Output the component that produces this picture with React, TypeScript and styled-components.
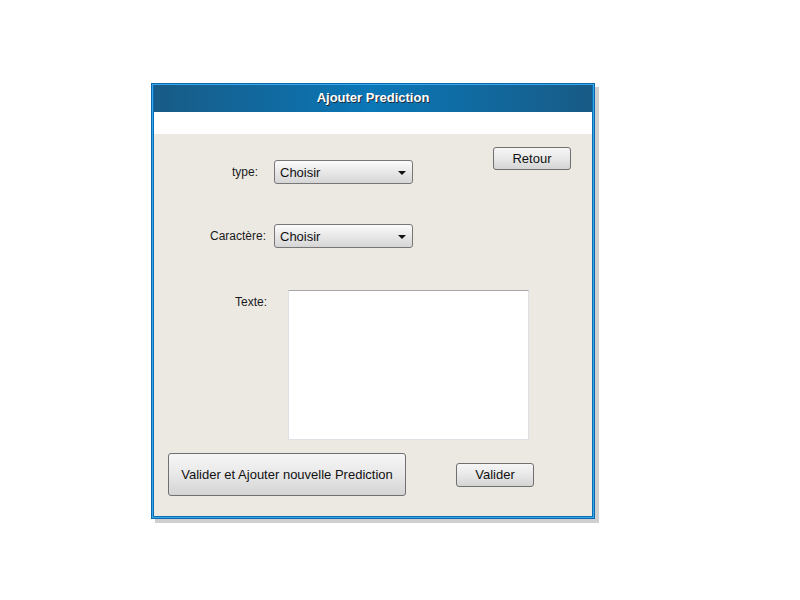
import React from "react";
import styled, { createGlobalStyle } from "styled-components";

const Global = createGlobalStyle`
  html, body { margin: 0; padding: 0; background: #ffffff; }
  body { font-family: "Liberation Sans", Arial, sans-serif; }
`;

const Page = styled.div`
  padding: 83px 0 0 151px;
  width: 800px;
  height: 600px;
  box-sizing: border-box;
`;

const Window = styled.div`
  width: 444px;
  box-sizing: border-box;
  border: 1px solid #0a68ad;
  padding: 1px;
  background: #3aa6ec;
  box-shadow: 4px 4px 0 #cfcfcf;
`;

const Inner = styled.div`
  border: 1px solid #0a6cb3;
  border-top: none;
  display: flex;
  flex-direction: column;
`;

const TitleBar = styled.div`
  height: 27px;
  box-sizing: border-box;
  padding-bottom: 2px;
  display: flex;
  align-items: center;
  justify-content: center;
  background: linear-gradient(to right, #185b86 0%, #0a77b7 50%, #185b86 100%);
  color: #ffffff;
  font-weight: bold;
  font-size: 13px;
  text-shadow: 1px 1px 0 #1f2a33;
`;

const Strip = styled.div`
  height: 22px;
  background: #ffffff;
`;

const Content = styled.div`
  background: #ece9e3;
  padding: 13px 0 20px 0;
  display: flex;
  flex-direction: column;
`;

const Row = styled.div<{ $mt?: number; $align?: string }>`
  display: flex;
  align-items: ${(p) => p.$align || "flex-start"};
  margin-top: ${(p) => p.$mt || 0}px;
`;

const Field = styled.div<{ $mt?: number; $align?: string }>`
  display: flex;
  align-items: ${(p) => p.$align || "center"};
  margin-top: ${(p) => p.$mt || 0}px;
`;

const Label = styled.div<{ $gap: number; $pt?: number }>`
  width: 120px;
  box-sizing: border-box;
  text-align: right;
  padding-right: ${(p) => p.$gap}px;
  padding-top: ${(p) => p.$pt || 0}px;
  font-size: 12px;
  color: #1a1a1a;
`;

const Select = styled.div`
  width: 139px;
  height: 24px;
  box-sizing: border-box;
  border: 1px solid #777777;
  border-radius: 3px;
  background: linear-gradient(to bottom, #fbfbfb 0%, #e6e6e6 55%, #d6d6d6 100%);
  display: flex;
  align-items: center;
  justify-content: space-between;
  padding: 0 6px 0 5px;
  font-size: 13px;
  color: #111111;
`;

const Arrow = styled.span`
  width: 0;
  height: 0;
  border-left: 4px solid transparent;
  border-right: 4px solid transparent;
  border-top: 4px solid #111111;
  margin-top: 2px;
`;

const Button = styled.button<{ $w: number; $h: number }>`
  width: ${(p) => p.$w}px;
  height: ${(p) => p.$h}px;
  box-sizing: border-box;
  border: 1px solid #707070;
  border-radius: 3px;
  background: linear-gradient(to bottom, #f6f6f6 0%, #e8e8e8 50%, #d4d4d4 100%);
  font-family: "Liberation Sans", Arial, sans-serif;
  font-size: 13px;
  color: #111111;
  padding: 0;
  cursor: pointer;
`;

const TextArea = styled.div`
  width: 241px;
  height: 150px;
  box-sizing: border-box;
  margin-left: 14px;
  background: #ffffff;
  border: 1px solid #dde0e4;
  border-top-color: #a8a8a8;
`;

const Spacer = styled.div`
  flex: 1;
`;

export default function App() {
  return (
    <>
      <Global />
      <Page>
        <Window>
          <Inner>
            <TitleBar>Ajouter Prediction</TitleBar>
            <Strip />
            <Content>
              <Row>
                <Field $mt={13}>
                  <Label $gap={16}>type:</Label>
                  <Select>
                    Choisir
                    <Arrow />
                  </Select>
                </Field>
                <Spacer />
                <Button $w={78} $h={23} style={{ marginRight: 21 }}>
                  Retour
                </Button>
              </Row>
              <Field $mt={40}>
                <Label $gap={8}>Caractère:</Label>
                <Select>
                  Choisir
                  <Arrow />
                </Select>
              </Field>
              <Field $mt={42} $align="flex-start">
                <Label $gap={7} $pt={5}>Texte:</Label>
                <TextArea />
              </Field>
              <Row $mt={13} $align="center">
                <Button $w={238} $h={43} style={{ marginLeft: 14 }}>
                  Valider et Ajouter nouvelle Prediction
                </Button>
                <Button $w={78} $h={24} style={{ marginLeft: 50 }}>
                  Valider
                </Button>
              </Row>
            </Content>
          </Inner>
        </Window>
      </Page>
    </>
  );
}
